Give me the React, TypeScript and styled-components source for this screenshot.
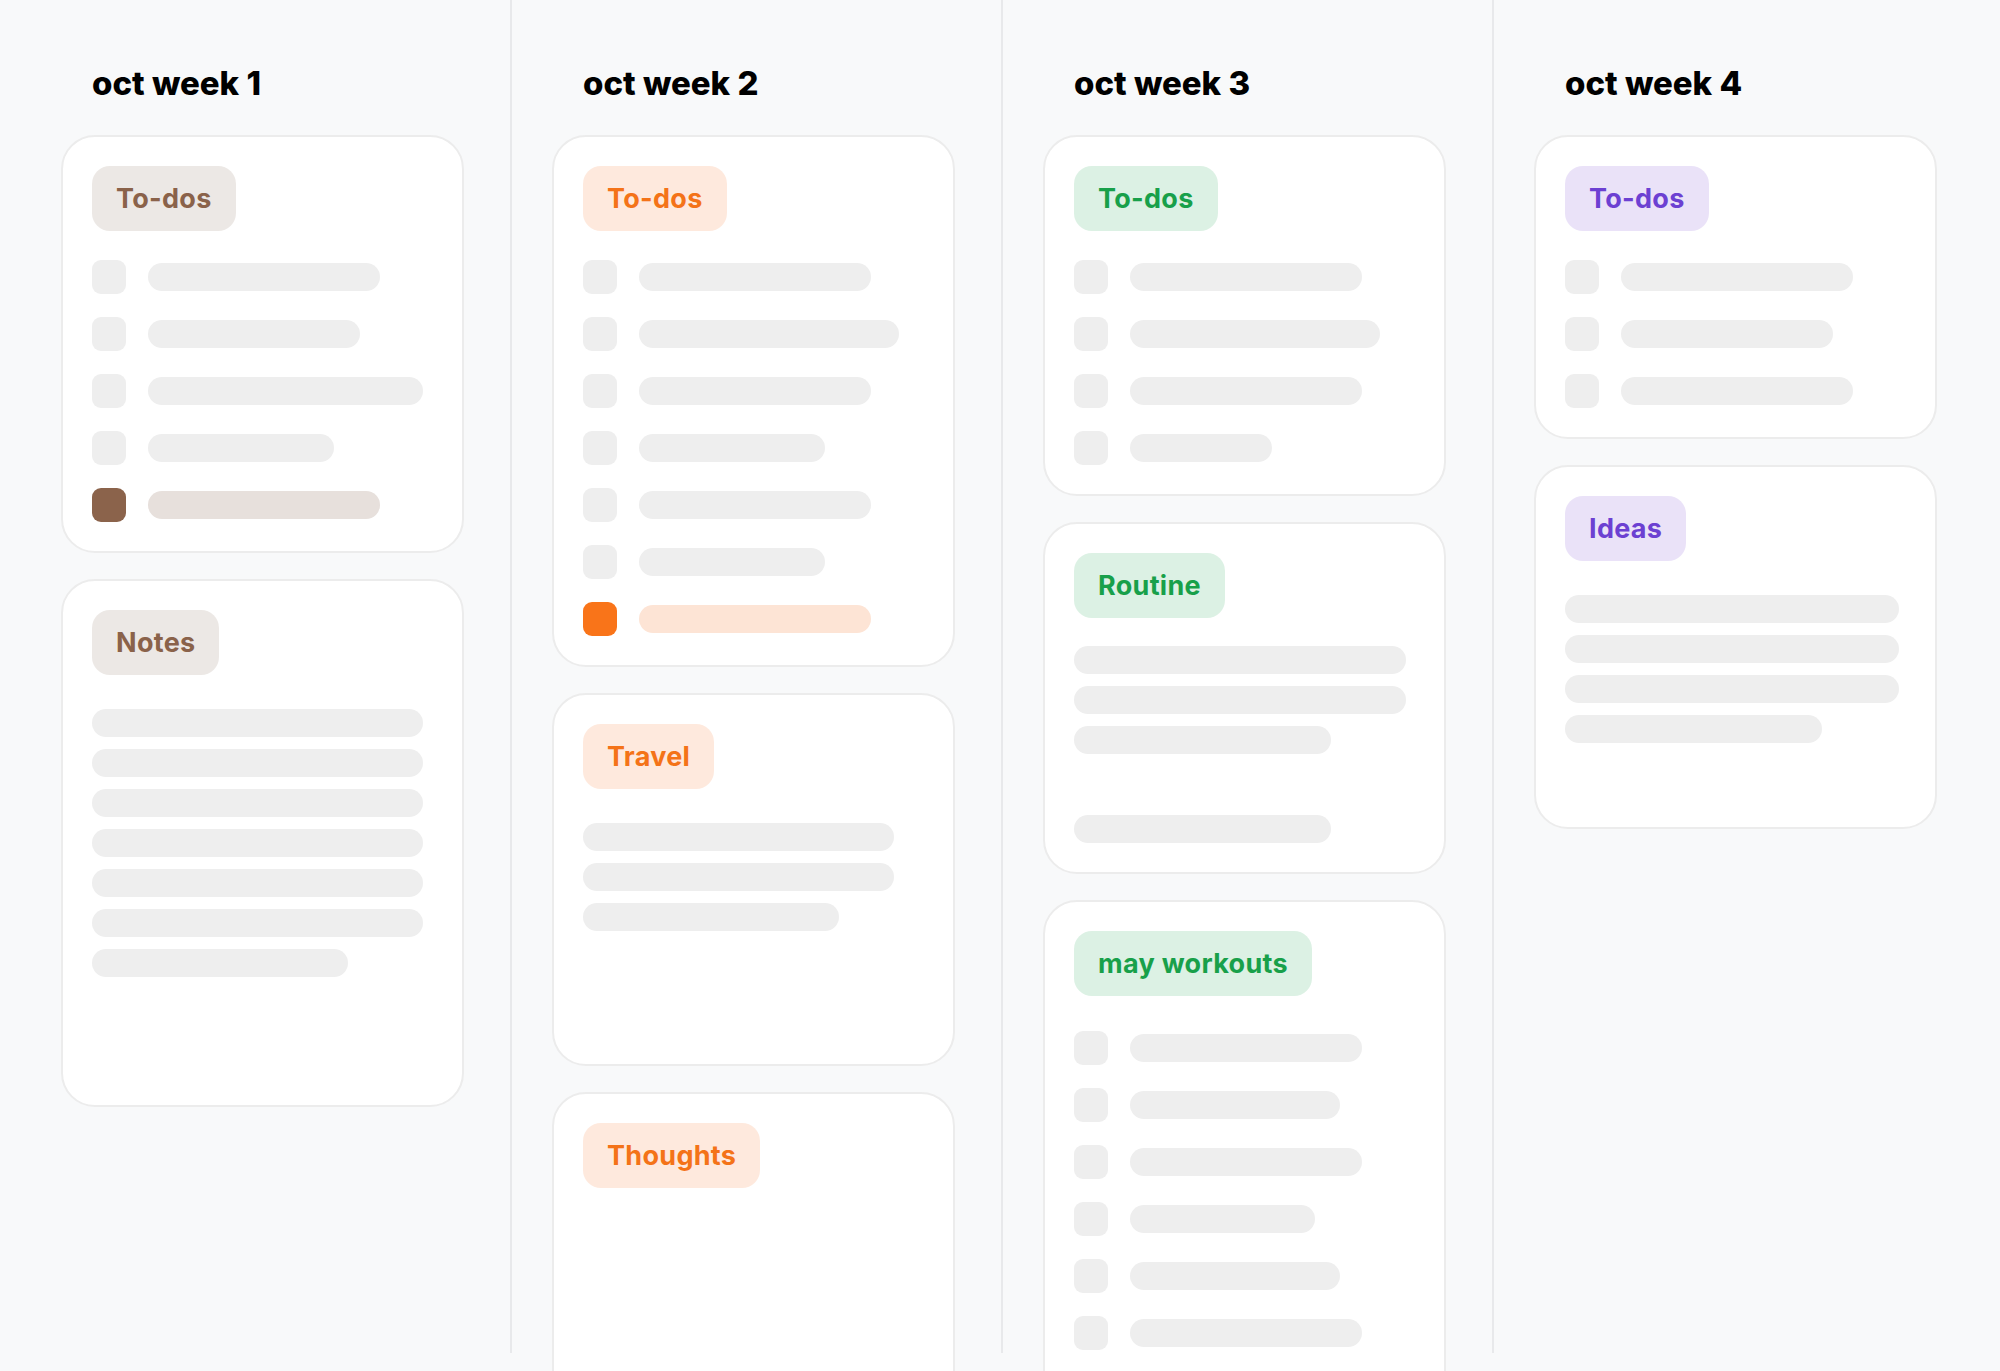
import styled, { createGlobalStyle } from "styled-components";

type Tone = "brown" | "orange" | "green" | "purple";

const tones: Record<Tone, { text: string; tag: string; check: string; bar: string }> = {
	brown:	{ text: "#8a624a", tag: "#ece8e5", check: "#8b634b", bar: "#e7e0dc" },
	orange:	{ text: "#f47318", tag: "#fee9dd", check: "#f97419", bar: "#fde4d5" },
	green:	{ text: "#18a04a", tag: "#dcf1e4", check: "#18a04a", bar: "#dcf1e4" },
	purple:	{ text: "#6c40d2", tag: "#eae2f8", check: "#6c40d2", bar: "#eae2f8" },
};

type TodoCard = { kind: "todo"; tag: string; rows: number[]; done?: number; tagGap?: number };
type TextCard = { kind: "text"; tag: string; lines: { w: number; mt?: number }[]; minH: number; tagGap?: number };
type Week = { title: string; tone: Tone; cards: (TodoCard | TextCard)[] };

const full = (n: number, w = 331) => Array.from({ length: n }, () => ({ w }));

const weeks: Week[] = [
	{ title: "oct week 1", tone: "brown", cards: [
		{ kind: "todo", tag: "To-dos", rows: [232, 212, 275, 186, 232], done: 4 },
		{ kind: "text", tag: "Notes", lines: [...full(6), { w: 256 }], minH: 528 },
	] },
	{ title: "oct week 2", tone: "orange", cards: [
		{ kind: "todo", tag: "To-dos", rows: [232, 260, 232, 186, 232, 186, 232], done: 6 },
		{ kind: "text", tag: "Travel", lines: [...full(2, 311), { w: 256 }], minH: 373 },
		{ kind: "text", tag: "Thoughts", lines: [], minH: 420 },
	] },
	{ title: "oct week 3", tone: "green", cards: [
		{ kind: "todo", tag: "To-dos", rows: [232, 250, 232, 142] },
		{ kind: "text", tag: "Routine", lines: [...full(2, 332), { w: 257 }, { w: 257, mt: 61 }], minH: 352, tagGap: 28 },
		{ kind: "todo", tag: "may workouts", rows: [232, 210, 232, 185, 210, 232, 210], tagGap: 35 },
	] },
	{ title: "oct week 4", tone: "purple", cards: [
		{ kind: "todo", tag: "To-dos", rows: [232, 212, 232] },
		{ kind: "text", tag: "Ideas", lines: [...full(3, 334), { w: 257 }], minH: 364 },
	] },
];

const GlobalStyle = createGlobalStyle`
	html, body {
		margin: 0;
		height: 100%;
		overflow: hidden;
		background: #f8f9fa;
	}
	* { box-sizing: border-box; }
`;

const Board = styled.main`
	display: flex;
	align-items: flex-start;
	padding-left: 19px;
	font-family: Inter, "Noto Sans", sans-serif;
`;

const Column = styled.section`
	width: 491px;
	height: 1353px;
	padding: 63px 46px 0 42px;
	display: flex;
	flex-direction: column;

	& + & {
		border-left: 2px solid #e8e9eb;
		padding-left: 40px;
	}
`;

const WeekTitle = styled.h2`
	margin: 0 0 32px 31px;
	font-size: 33px;
	line-height: 40px;
	font-weight: 800;
	letter-spacing: 0;
	color: #000;
`;

const Stack = styled.div`
	display: flex;
	flex-direction: column;
	gap: 26px;
`;

const Card = styled.article<{ $minH?: number }>`
	width: 403px;
	min-height: ${ ({ $minH }) => $minH ?? 0 }px;
	flex-shrink: 0;
	background: #fff;
	border: 2px solid #ececec;
	border-radius: 34px;
	padding: 29px;
	display: flex;
	flex-direction: column;
	align-items: flex-start;
`;

const Tag = styled.span<{ $tone: Tone; $gap: number }>`
	display: inline-flex;
	align-items: center;
	height: 65px;
	padding: 0 24px;
	margin-bottom: ${ ({ $gap }) => $gap }px;
	border-radius: 18px;
	background: ${ ({ $tone }) => tones[$tone].tag };
	color: ${ ({ $tone }) => tones[$tone].text };
	font-size: 27px;
	font-weight: 700;
	letter-spacing: 0.3px;
	white-space: nowrap;
`;

const TodoList = styled.ul`
	list-style: none;
	margin: 0;
	padding: 0;
	display: flex;
	flex-direction: column;
	gap: 23px;
`;

const TodoRow = styled.li`
	display: flex;
	align-items: center;
	gap: 22px;
	height: 34px;
`;

const Check = styled.span<{ $tone: Tone; $done: boolean }>`
	width: 34px;
	height: 34px;
	border-radius: 9px;
	flex-shrink: 0;
	background: ${ ({ $tone, $done }) => $done ? tones[$tone].check : "#eeeeee" };
`;

const Bar = styled.span<{ $w: number; $tone?: Tone }>`
	display: block;
	width: ${ ({ $w }) => $w }px;
	height: 28px;
	border-radius: 14px;
	background: ${ ({ $tone }) => $tone ? tones[$tone].bar : "#eeeeee" };
`;

const Lines = styled.div`
	display: flex;
	flex-direction: column;
	gap: 12px;
`;

const Line = styled(Bar)<{ $mt?: number }>`
	margin-top: ${ ({ $mt }) => $mt ? $mt - 12 : 0 }px;
`;

const WeekCard = ({ card, tone }: { card: TodoCard | TextCard; tone: Tone }) => {
	if(card.kind === "todo") {
		return(
			<Card>
				<Tag $tone={ tone } $gap={ card.tagGap ?? 29 }>{ card.tag }</Tag>
				<TodoList>
					{ card.rows.map((w, i) => {
						const done = card.done === i;
						return(
							<TodoRow key={ i }>
								<Check $tone={ tone } $done={ done } />
								<Bar $w={ w } $tone={ done ? tone : undefined } />
							</TodoRow>
						);
					}) }
				</TodoList>
			</Card>
		);
	}
	return(
		<Card $minH={ card.minH }>
			<Tag $tone={ tone } $gap={ card.tagGap ?? 34 }>{ card.tag }</Tag>
			<Lines>
				{ card.lines.map((line, i) => (
					<Line key={ i } $w={ line.w } $mt={ line.mt } />
				)) }
			</Lines>
		</Card>
	);
};

export default function App() {
	return(
		<>
			<GlobalStyle />
			<Board>
				{ weeks.map(week => (
					<Column key={ week.title }>
						<WeekTitle>{ week.title }</WeekTitle>
						<Stack>
							{ week.cards.map((card, i) => (
								<WeekCard key={ i } card={ card } tone={ week.tone } />
							)) }
						</Stack>
					</Column>
				)) }
			</Board>
		</>
	);
}
